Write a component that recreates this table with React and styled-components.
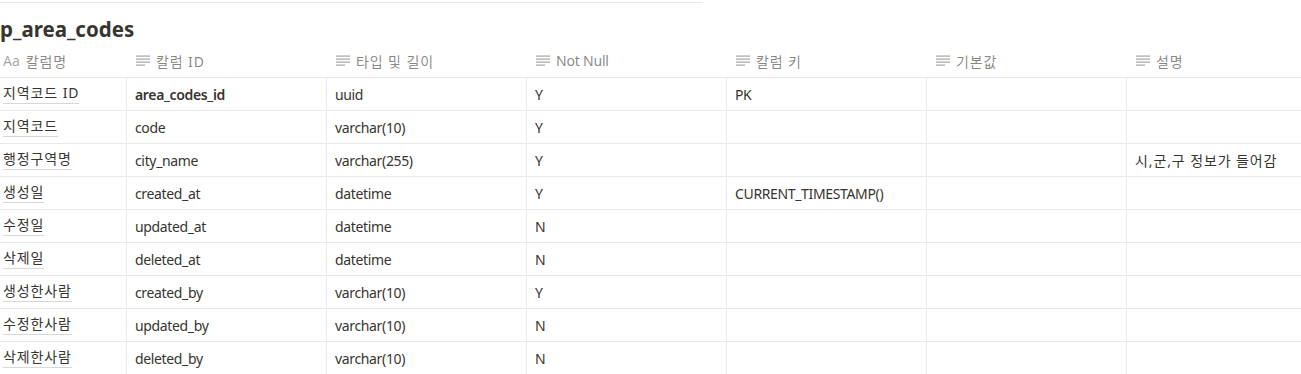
import React from 'react';
import styled, { createGlobalStyle } from 'styled-components';

const GlobalStyle = createGlobalStyle`
  html, body {
    margin: 0;
    padding: 0;
    background: #ffffff;
    overflow: hidden;
  }
  body {
    font-family: "Segoe UI", "Noto Sans", "Noto Sans CJK KR", sans-serif;
    color: #37352f;
  }
`;

const Page = styled.div`
  width: 1301px;
  height: 374px;
  overflow: hidden;
`;

const Divider = styled.div`
  width: 703px;
  height: 1px;
  margin-top: 2px;
  background: #e9e9e7;
`;

const Title = styled.h2`
  margin: 0;
  height: 41px;
  padding-top: 13px;
  box-sizing: border-box;
  font-size: 20.5px;
  font-weight: 700;
  line-height: 26px;
  color: #37352f;
`;

const Table = styled.div`
  display: flex;
  flex-direction: column;
  width: 1400px;
`;

const Row = styled.div`
  display: grid;
  grid-template-columns: 127px repeat(6, 200px);
  height: ${(p) => (p.$head ? 34 : 33)}px;
  box-sizing: border-box;
  border-bottom: 1px solid #e9e9e7;
`;

const HeadCell = styled.div`
  display: flex;
  align-items: center;
  gap: 6px;
  padding-left: ${(p) => (p.$first ? 3 : 9)}px;
  font-size: 14px;
  letter-spacing: ${(p) => (p.$ko ? '0.9px' : '-0.2px')};
  color: rgba(55, 53, 47, 0.6);
  white-space: nowrap;
`;

const Cell = styled.div`
  display: flex;
  align-items: center;
  padding-left: ${(p) => (p.$first ? 3 : 8)}px;
  border-right: ${(p) => (p.$last ? 'none' : '1px solid #e9e9e7')};
  font-size: 14px;
  letter-spacing: ${(p) => (p.$ko ? '0.9px' : '-0.35px')};
  font-weight: ${(p) => (p.$bold ? 600 : 400)};
  color: #37352f;
  white-space: nowrap;
  overflow: hidden;
`;

const NameLink = styled.span`
  line-height: 1.3;
  border-bottom: 1px solid rgba(55, 53, 47, 0.2);
`;

const AaIcon = styled.span`
  font-size: 14px;
  letter-spacing: 0;
  color: rgba(55, 53, 47, 0.45);
`;

const TextIcon = () => (
  <svg width="14" height="12" viewBox="0 0 14 12" aria-hidden="true">
    <g fill="rgba(55,53,47,0.45)">
      <rect x="0" y="0.5" width="14" height="1.2" />
      <rect x="0" y="3.5" width="14" height="1.2" />
      <rect x="0" y="6.5" width="14" height="1.2" />
      <rect x="0" y="9.5" width="9" height="1.2" />
    </g>
  </svg>
);

const isKo = (s) => /[\uac00-\ud7a3]/.test(s);

const headers = ['칼럼 ID', '타입 및 길이', 'Not Null', '칼럼 키', '기본값', '설명'];

const rows = [
  ['지역코드 ID', 'area_codes_id', 'uuid', 'Y', 'PK', '', ''],
  ['지역코드', 'code', 'varchar(10)', 'Y', '', '', ''],
  ['행정구역명', 'city_name', 'varchar(255)', 'Y', '', '', '시,군,구 정보가 들어감'],
  ['생성일', 'created_at', 'datetime', 'Y', 'CURRENT_TIMESTAMP()', '', ''],
  ['수정일', 'updated_at', 'datetime', 'N', '', '', ''],
  ['삭제일', 'deleted_at', 'datetime', 'N', '', '', ''],
  ['생성한사람', 'created_by', 'varchar(10)', 'Y', '', '', ''],
  ['수정한사람', 'updated_by', 'varchar(10)', 'N', '', '', ''],
  ['삭제한사람', 'deleted_by', 'varchar(10)', 'N', '', '', ''],
];

const App = () => (
  <Page>
    <GlobalStyle />
    <Divider />
    <Title>p_area_codes</Title>
    <Table>
      <Row $head>
        <HeadCell $first $ko>
          <AaIcon>Aa</AaIcon>
          칼럼명
        </HeadCell>
        {headers.map((h) => (
          <HeadCell key={h} $ko={isKo(h)}>
            <TextIcon />
            {h}
          </HeadCell>
        ))}
      </Row>
      {rows.map((r, i) => (
        <Row key={r[1]}>
          {r.map((v, j) => (
            <Cell
              key={j}
              $first={j === 0}
              $last={j === 6}
              $ko={isKo(v)}
              $bold={i === 0 && j === 1}
            >
              {j === 0 ? <NameLink>{v}</NameLink> : v}
            </Cell>
          ))}
        </Row>
      ))}
    </Table>
  </Page>
);

export default App;
